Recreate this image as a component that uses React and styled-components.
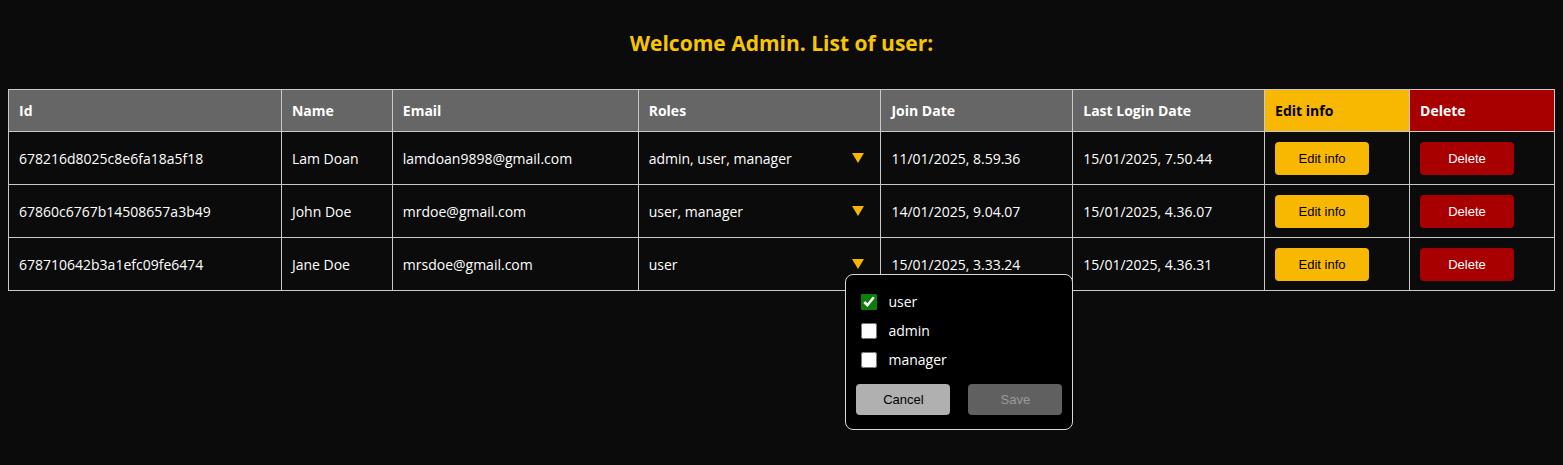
import styled, { createGlobalStyle } from 'styled-components'

const GlobalStyle = createGlobalStyle`
    body {
        margin: 8px;
        background: #0b0b0b;
        color: #ffffff;
        font-family: 'Open Sans', 'Noto Sans', sans-serif;
    }
`

const Page = styled.div`
    min-height: calc(100vh - 16px);
`

const Title = styled.h2`
    margin: 21px 0 32px;
    text-align: center;
    font-size: 21px;
    line-height: 28px;
    font-weight: 700;
    color: #f7c600;
`

const Table = styled.table`
    width: 100%;
    border-collapse: collapse;
    font-size: 14px;
    th,
    td {
        border: 1px solid #c9c9c9;
        text-align: left;
        padding: 0 10px;
    }
`

const Th = styled.th`
    height: 41px;
    font-weight: 700;
    background: ${(p) => p.$bg || '#666666'};
    color: ${(p) => p.$color || '#ffffff'};
`

const Td = styled.td`
    height: 52px;
    font-weight: 400;
`

const RolesCell = styled.div`
    display: flex;
    align-items: center;
    justify-content: space-between;
    padding-right: 6px;
`

const Toggle = styled.div`
    position: relative;
    width: 12px;
    height: 10px;
    display: flex;
    cursor: pointer;
`

const Popup = styled.div`
    position: absolute;
    top: calc(100% + 5px);
    left: -7px;
    width: 206px;
    padding: 12px 10px 14px 10px;
    background: #000000;
    border: 1px solid #d8d8d8;
    border-radius: 8px;
    z-index: 5;
    cursor: default;
`

const Option = styled.label`
    display: flex;
    align-items: center;
    gap: 11px;
    height: 29px;
    padding-left: 5px;
    font-size: 14px;
    > input {
        margin: 0;
        width: 16px;
        height: 16px;
        accent-color: #0a7d0a;
    }
`

const Actions = styled.div`
    display: flex;
    justify-content: space-between;
    margin-top: 10px;
`

const Btn = styled.button`
    width: 94px;
    height: ${(p) => p.$h || 33}px;
    border: none;
    border-radius: 4px;
    font-family: 'Liberation Sans', Arial, sans-serif;
    font-size: 13px;
    background: ${(p) => p.$bg};
    color: ${(p) => p.$color};
    cursor: pointer;
`

const users = [
    {
        id: '678216d8025c8e6fa18a5f18',
        name: 'Lam Doan',
        email: 'lamdoan9898@gmail.com',
        roles: 'admin, user, manager',
        join: '11/01/2025, 8.59.36',
        last: '15/01/2025, 7.50.44',
    },
    {
        id: '67860c6767b14508657a3b49',
        name: 'John Doe',
        email: 'mrdoe@gmail.com',
        roles: 'user, manager',
        join: '14/01/2025, 9.04.07',
        last: '15/01/2025, 4.36.07',
    },
    {
        id: '678710642b3a1efc09fe6474',
        name: 'Jane Doe',
        email: 'mrsdoe@gmail.com',
        roles: 'user',
        join: '15/01/2025, 3.33.24',
        last: '15/01/2025, 4.36.31',
        open: true,
    },
]

const widths = [273, 111, 246, 243, 192, 192, 145, 145]

function Arrow() {
    return (
        <svg width='12' height='10' viewBox='0 0 12 10'>
            <polygon points='0,0 12,0 6,10' fill='#f7b500' />
        </svg>
    )
}

export default function App() {
    return (
        <Page>
            <GlobalStyle />
            <Title>Welcome Admin. List of user:</Title>
            <Table>
                <colgroup>
                    {widths.map((w, i) => (
                        <col key={i} style={{ width: w }} />
                    ))}
                </colgroup>
                <thead>
                    <tr>
                        <Th>Id</Th>
                        <Th>Name</Th>
                        <Th>Email</Th>
                        <Th>Roles</Th>
                        <Th>Join Date</Th>
                        <Th>Last Login Date</Th>
                        <Th $bg='#f8b700' $color='#000000'>
                            Edit info
                        </Th>
                        <Th $bg='#a80000'>Delete</Th>
                    </tr>
                </thead>
                <tbody>
                    {users.map((u) => (
                        <tr key={u.id}>
                            <Td>{u.id}</Td>
                            <Td>{u.name}</Td>
                            <Td>{u.email}</Td>
                            <Td>
                                <RolesCell>
                                    <span>{u.roles}</span>
                                    <Toggle>
                                        <Arrow />
                                        {u.open && (
                                            <Popup>
                                                <Option>
                                                    <input type='checkbox' defaultChecked />
                                                    user
                                                </Option>
                                                <Option>
                                                    <input type='checkbox' />
                                                    admin
                                                </Option>
                                                <Option>
                                                    <input type='checkbox' />
                                                    manager
                                                </Option>
                                                <Actions>
                                                    <Btn $h={31} $bg='#b0b0b0' $color='#000000'>
                                                        Cancel
                                                    </Btn>
                                                    <Btn $h={31} $bg='#606060' $color='#9a9a9a'>
                                                        Save
                                                    </Btn>
                                                </Actions>
                                            </Popup>
                                        )}
                                    </Toggle>
                                </RolesCell>
                            </Td>
                            <Td>{u.join}</Td>
                            <Td>{u.last}</Td>
                            <Td>
                                <Btn $bg='#f8b700' $color='#000000'>
                                    Edit info
                                </Btn>
                            </Td>
                            <Td>
                                <Btn $bg='#a80000' $color='#ffffff'>
                                    Delete
                                </Btn>
                            </Td>
                        </tr>
                    ))}
                </tbody>
            </Table>
        </Page>
    )
}
